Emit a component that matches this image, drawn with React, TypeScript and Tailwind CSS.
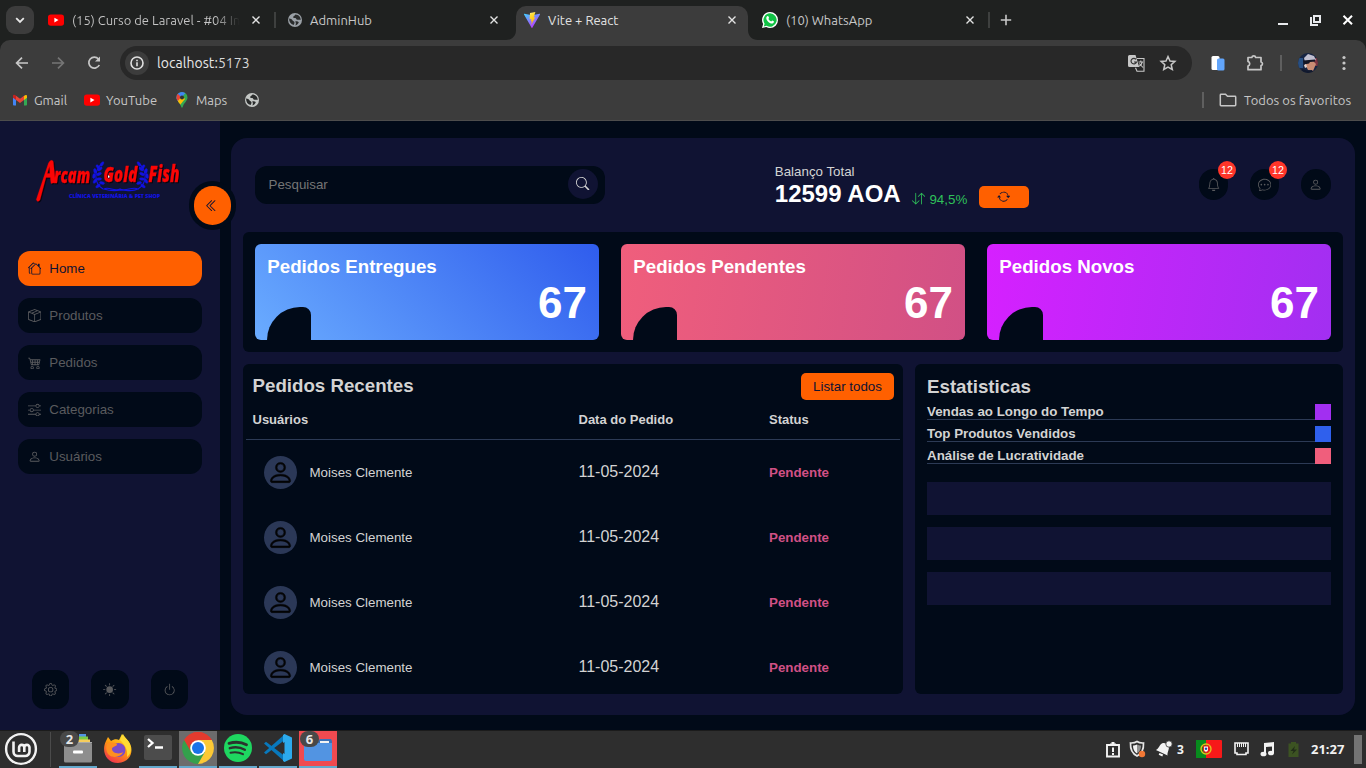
import type { ReactNode } from "react";
import {
  BsArrowDownUp,
  BsArrowRepeat,
  BsBell,
  BsBoxSeam,
  BsBrightnessHighFill,
  BsCart4,
  BsChatDots,
  BsChevronDoubleLeft,
  BsGear,
  BsHouses,
  BsPerson,
  BsPower,
  BsSearch,
  BsSliders,
} from "react-icons/bs";

function YouTubeIcon() {
  return (
    <svg width="16" height="16" viewBox="0 0 16 16" className="shrink-0">
      <rect y="2.4" width="16" height="11.4" rx="2.8" fill="#ff0000" />
      <path d="M6.4 5.7v4.8L10.5 8.1z" fill="#fff" />
    </svg>
  );
}

function GlobeIcon({ color }: { color: string }) {
  return (
    <svg width="14" height="14" viewBox="0 0 14 14" className="shrink-0">
      <circle cx="7" cy="7" r="7" fill={color} />
      <path
        d="M1.1 5.6c1.6.2 3 .8 3.5 1.9.5.9 1.8.6 1.9 1.8.1 1-.3 1.8-.9 2.8C2.5 11.4 1 8.6 1.1 5.6zM7.4 1.4c-.3 1.3-2.4 1.5-2.3 2.8.2 1 1.6.5 2.4.8.9.4.6 1.6 1.8 1.8 1 .1 1.9-.4 3.3.2C13 4 10.6 1.5 7.4 1.4zM7.2 8.6c1.2-.5 2.8-.3 3.6.7-.4 1.4-1.8 2.9-3.4 3.2.5-1.3.8-2.6-.2-3.9z"
        fill="#2a2c2c"
      />
    </svg>
  );
}

function CloseIcon() {
  return (
    <svg width="8" height="8" viewBox="0 0 8 8" className="shrink-0">
      <path d="M.5.5l7 7M7.5.5l-7 7" stroke="#e3e3e3" strokeWidth="1.4" />
    </svg>
  );
}

function TabStrip() {
  return (
    <div className="flex h-10 shrink-0 items-center bg-[#1f2120] text-[13px] text-[#c7c7c7]">
      <div className="ml-1.5 flex h-7 w-7 shrink-0 items-center justify-center rounded-[9px] bg-[#3c3c3c]">
        <svg width="10" height="7" viewBox="0 0 10 7">
          <path d="M1.2 1.2L5 5l3.8-3.8" fill="none" stroke="#e8e8e8" strokeWidth="1.8" />
        </svg>
      </div>
      <div className="ml-3.5 flex w-[213px] items-center">
        <YouTubeIcon />
        <span className="ml-2 w-[168px] overflow-hidden bg-linear-to-r from-[#c7c7c7] from-85% to-transparent bg-clip-text pt-px whitespace-nowrap text-transparent">
          (15) Curso de Laravel - #04 In
        </span>
        <span className="ml-3">
          <CloseIcon />
        </span>
      </div>
      <div className="ml-[13px] h-4 w-0.5 bg-[#3e403f]" />
      <div className="ml-[12px] flex w-[210px] items-center">
        <GlobeIcon color="#9aa0a6" />
        <span className="mt-px ml-2 grow">AdminHub</span>
        <CloseIcon />
      </div>
      <div className="mt-1.5 ml-[8px] flex h-[34px] items-end">
        <svg width="10" height="10" viewBox="0 0 10 10">
          <path d="M10 0v10H0C6 10 10 6 10 0z" fill="#3c3c3c" />
        </svg>
        <div className="flex h-[34px] w-[232px] items-center rounded-t-[10px] bg-[#3c3c3c] pr-3 pb-1.5 pl-2 text-[#e3e3e3]">
          <svg width="16" height="16" viewBox="0 0 16 16" className="shrink-0">
            <defs>
              <linearGradient id="vite-a" x1="0" y1="0" x2=".6" y2="1">
                <stop stopColor="#41d1ff" />
                <stop offset="1" stopColor="#bd34fe" />
              </linearGradient>
              <linearGradient id="vite-b" x1=".4" y1="0" x2=".6" y2="1">
                <stop stopColor="#ffea83" />
                <stop offset=".2" stopColor="#ffdd35" />
                <stop offset="1" stopColor="#ffa800" />
              </linearGradient>
            </defs>
            <path d="M16 2.4L8.3 15.8c-.2.3-.5.3-.7 0L0 2.4c-.2-.3.1-.6.4-.6L8 3.2l7.500-1.4c.4 0 .7.3.5.6z" fill="url(#vite-a)" />
            <path d="M11.4 0L6 1.1l-.4 6.1 1.7-.3-.5 2.5 1.1-.3-.8 3.8 4.200-7.6-1.6.3z" fill="url(#vite-b)" />
          </svg>
          <span className="mt-0.5 ml-2 grow">Vite + React</span>
          <CloseIcon />
        </div>
        <svg width="10" height="10" viewBox="0 0 10 10">
          <path d="M0 0v10h10C4 10 0 6 0 0z" fill="#3c3c3c" />
        </svg>
      </div>
      <div className="ml-1 flex w-[212px] items-center">
        <svg width="16" height="16" viewBox="0 0 16 16" className="shrink-0">
          <path d="M8 0a8 8 0 0 1 0 16 8 8 0 0 1-3.800-1L0 16l1.100-4A8 8 0 0 1 8 0z" fill="#fff" />
          <path d="M8 1.300a6.700 6.700 0 1 1-3.400 12.500l-2.800.6.8-2.700A6.700 6.700 0 0 1 8 1.300z" fill="#11c245" />
          <path d="M5.500 4.100c.5-.2.8 0 1 .5l.5 1.100c.1.4-.5.9-.6 1.200.7 1.300 1.600 2 2.800 2.500.4-.1.800-1 1.100-.9l1.500.8c.5.3-.1 1.700-.8 2-1.300.7-3.800-.4-5.300-2.100C4 7.300 3.600 5 5.500 4.100z" fill="#fff" />
        </svg>
        <span className="mt-px ml-2 grow">(10) WhatsApp</span>
        <CloseIcon />
      </div>
      <div className="ml-[14px] h-4 w-0.5 bg-[#3e403f]" />
      <svg width="12" height="12" viewBox="0 0 12 12" className="ml-2.5">
        <path d="M6 .8v10.400M.8 6h10.400" stroke="#c7c7c7" strokeWidth="1.6" />
      </svg>
      <svg width="76" height="12" viewBox="0 0 76 12" className="mr-3 ml-auto">
        <path d="M0 10h10" stroke="#e8eaed" strokeWidth="2" />
        <path d="M36 2h6v6h-6zM33 3v8h7" fill="none" stroke="#e8eaed" strokeWidth="2" />
        <path d="M65.500 1.700l8.500 8.500M74 1.700l-8.500 8.500" stroke="#fff" strokeWidth="2" />
      </svg>
    </div>
  );
}

function AddressBar() {
  return (
    <div className="flex h-[46px] items-center text-[#c7c7c7]">
      <svg width="88" height="16" viewBox="0 0 88 16" className="ml-[15px]" fill="none" strokeWidth="1.7">
        <path d="M13 8H2M7 2.600L1.600 8 7 13.400" stroke="#c7c7c7" />
        <path d="M37 8h11M43 2.600L48.400 8 43 13.400" stroke="#757575" />
        <path d="M84.300 10a5.500 5.500 0 1 1-.8-6" stroke="#c7c7c7" />
        <path d="M85 1.500v5h-5z" fill="#c7c7c7" />
      </svg>
      <div className="ml-[17px] flex h-[34px] w-[1072px] items-center rounded-full bg-[#282828] px-[5px]">
        <div className="flex h-6 w-6 items-center justify-center rounded-full bg-[#3c3c3c]">
          <svg width="14" height="14" viewBox="0 0 14 14">
            <circle cx="7" cy="7" r="6" fill="none" stroke="#e0e0e0" strokeWidth="1.6" />
            <path d="M7 6.200v4M7 3.700v1.500" stroke="#e0e0e0" strokeWidth="1.6" />
          </svg>
        </div>
        <span className="ml-2 text-[14px] tracking-[0.050px] text-[#d8d8d8]">
          <span className="text-[#e8e8e8]">localhost:</span>5173
        </span>
        <svg width="50" height="18" viewBox="0 0 50 18" className="mr-[9px] ml-auto">
          <path d="M1.500 1h6l3.700 12H1.500A1.500 1.500 0 0 1 0 11.500v-9A1.500 1.500 0 0 1 1.500 1z" fill="#c7c7c7" />
          <path d="M8 5.300A2.800 2.800 0 1 0 8.500 8H6" fill="none" stroke="#333" strokeWidth="1.2" />
          <path d="M9 4.500h7v12.700H9l-1.500-3.500M10.500 8h4.500M12.800 6.500V8M14.300 8c-.5 2-1.500 3-3 4.200M11.300 9.500l3.700 4" fill="none" stroke="#c7c7c7" strokeWidth="1.1" />
          <path d="M40 2.500l2 4.500 4.900.4-3.700 3.300 1.100 4.800L40 13l-4.300 2.500 1.100-4.800-3.700-3.300L38 7z" fill="none" stroke="#c7c7c7" strokeWidth="1.5" />
        </svg>
      </div>
      <svg width="68" height="18" viewBox="0 0 68 18" className="ml-[18px]">
        <rect x="1.500" y="2" width="8" height="14" rx="1.5" fill="#fff" />
        <rect x="7" y="4.500" width="7.500" height="12" rx="1.5" fill="#62a5fb" />
        <path d="M38 3.500h3.800a2 2 0 0 1 3.900 0H51v4.500a1.900 1.900 0 0 1 0 3.700v4H38v-3.700a2.400 2.400 0 0 0 0-4.600z" fill="none" stroke="#c7c7c7" strokeWidth="1.7" strokeLinejoin="round" />
      </svg>
      <div className="ml-[2px] h-4 w-0.5 bg-[#5f5f5f]" />
      <svg width="20" height="20" viewBox="0 0 20 20" className="ml-4">
        <defs>
          <clipPath id="profile">
            <circle cx="10" cy="10" r="10" />
          </clipPath>
        </defs>
        <g clipPath="url(#profile)">
          <path d="M0 0h20v20H0z" fill="#172442" />
          <path d="M0 5h5v10H0z" fill="#284f82" />
          <path d="M14 5h6v8h-5z" fill="#7d3541" />
          <path d="M6 9l9-1 3 3-3 7-5-1z" fill="#c98c74" />
          <path d="M6 5l4-4 6 2 2 4-11 2z" fill="#c1bfd0" />
          <path d="M5 7.500l12-1v2l-5 .5-1 1.500-5 1z" fill="#141625" />
          <path d="M6 12l2-1 1 3-2 1z" fill="#e5d7d3" />
          <path d="M4 16l5 1.500 5-.5 3 4H3z" fill="#11192d" />
        </g>
      </svg>
      <svg width="4" height="16" viewBox="0 0 4 16" className="ml-6" fill="#c7c7c7">
        <circle cx="2" cy="2.500" r="1.6" />
        <circle cx="2" cy="8" r="1.6" />
        <circle cx="2" cy="13.500" r="1.6" />
      </svg>
    </div>
  );
}

function Bookmarks() {
  return (
    <div className="flex h-[28px] items-center text-[13px] text-[#c7c7c7]">
      <svg width="14" height="12" viewBox="0 0 14 12" className="ml-[13px]">
        <path d="M0 2.500v8.200c0 .5.400.8.800.8H3V5z" fill="#4285f4" />
        <path d="M14 2.500v8.200c0 .5-.4.8-.8.8H11V5z" fill="#34a853" />
        <path d="M11 2v4l3-2.200V2.200C14 .7 12.500.3 11 2z" fill="#fbbc04" />
        <path d="M3 6V1.800l4 3 4-3V6L7 9z" fill="#ea4335" />
        <path d="M0 2.200v1.600L3 6V1.800C1.500.2 0 .8 0 2.200z" fill="#c5221f" />
      </svg>
      <span className="mt-0.5 ml-[7px] w-[34px] whitespace-nowrap">Gmail</span>
      <span className="ml-4">
        <YouTubeIcon />
      </span>
      <span className="mt-0.5 ml-1.5 w-[52px] whitespace-nowrap">YouTube</span>
      <svg width="12" height="16" viewBox="0 0 12 16" className="ml-[18px]">
        <defs>
          <clipPath id="pin">
            <path d="M6 0a5.500 5.500 0 0 1 5.500 5.500C11.500 9 8 10.500 6.700 15c-.2.9-1.200.9-1.400 0C4 10.500.5 9 .5 5.500A5.500 5.500 0 0 1 6 0z" />
          </clipPath>
        </defs>
        <g clipPath="url(#pin)">
          <path d="M0 0h12v16H0z" fill="#34a853" />
          <path d="M0 12L12-2v-4H0z" fill="#4285f4" />
          <path d="M0 0l5.500 5.500-4.500 4.500H0z" fill="#ea4335" />
          <path d="M1 10l5-6 3 3-5 6z" fill="#fbbc04" />
          <circle cx="6" cy="5.500" r="2" fill="#303134" />
        </g>
      </svg>
      <span className="mt-0.5 ml-2 w-[32px] whitespace-nowrap">Maps</span>
      <span className="ml-[17px]">
        <GlobeIcon color="#c4c7c5" />
      </span>
      <div className="ml-auto h-4 w-0.5 bg-[#5f5f5f]" />
      <svg width="18" height="14" viewBox="0 0 18 14" className="ml-[15px]">
        <path d="M2 1.300h4.500l2 2H16a.7.7 0 0 1 .7.7v8a.7.7 0 0 1-.7.7H2a.7.7 0 0 1-.7-.7V2a.7.7 0 0 1 .7-.7z" fill="none" stroke="#c7c7c7" strokeWidth="1.5" />
      </svg>
      <span className="mt-0.5 mr-[14px] ml-[7px] w-[108px] tracking-[0.050px] whitespace-nowrap">Todos os favoritos</span>
    </div>
  );
}

function Laurel() {
  const leaves = [
    [4, 5, -40],
    [1, 9, -10],
    [0, 14, 10],
    [1, 19, 35],
    [4, 24, 55],
    [8, 2, 35],
    [6, 7, 50],
    [5, 12, 65],
    [5, 17, 85],
    [8, 21, 100],
  ];
  return (
    <g fill="none" stroke="#1212e2" strokeWidth="1.1">
      <path d="M10 1C1 7 0 21 10 27" />
      {leaves.map(([x, y, r], i) => (
        <ellipse key={i} cx={x + 1} cy={y} rx="1.3" ry="2.6" fill="#1212e2" strokeWidth=".4" transform={`rotate(${r} ${x + 1} ${y})`} />
      ))}
    </g>
  );
}

function LogoShadow({ children }: { children: ReactNode }) {
  return <g style={{ filter: "drop-shadow(1px 1px 0 #050510)" }}>{children}</g>;
}

function Logo() {
  return (
    <svg width="148" height="48" viewBox="0 0 148 48" className="mx-auto block overflow-visible">
      <g transform="translate(57 5)">
        <Laurel />
      </g>
      <g transform="translate(112 5) scale(-1 1)">
        <Laurel />
      </g>
      <path d="M68 32c5-3 10 3 16 0 6 3 12-3 18 0-6 3-11 1-17 1-6 1-11 1-17-1z" fill="none" stroke="#1212e2" strokeWidth="1.2" />
      <LogoShadow>
        <g fill="#fb0505" stroke="#fb0505" strokeWidth=".3" fontFamily="'Open Sans', 'Noto Sans', sans-serif" fontWeight="800" fontStyle="italic">
          <path d="M.3 42.500L12.500 6Q15 1.500 17.300 4.500L19.500 25.500 15 26.500 14.300 20.500H10L4 43Q1.500 46 .3 42.500zM11.300 16.500h2.700l-.6-7z" fillRule="evenodd" />
          <text transform="translate(18 25.500) scale(.700 1)" fontSize="21">rcam</text>
          <text transform="translate(67.500 25) scale(.720 1)" fontSize="21">Gold</text>
          <text transform="translate(112.500 24.500) scale(.700 1)" fontSize="22">Fish</text>
        </g>
      </LogoShadow>
      <text transform="translate(33 40.500)" fontFamily="'Open Sans', sans-serif" fontWeight="800" fontSize="5.200" fill="#1212e2" textLength="91" lengthAdjust="spacingAndGlyphs">
        CLÍNICA VETERINÁRIA &amp; PET SHOP
      </text>
      <path d="M72 18v3l2-1z" fill="#fff" />
    </svg>
  );
}

function MenuItem({ icon, label, active = false }: { icon: ReactNode; label: string; active?: boolean }) {
  return (
    <li
      className={
        active
          ? "flex h-[35px] items-center gap-2 rounded-xl bg-[#ff6000] pl-2.5 text-[#101333]"
          : "flex h-[35px] items-center gap-2 rounded-xl bg-[#010a18] pl-2.5 text-[#5a5b5e]"
      }
    >
      {icon}
      <span>{label}</span>
    </li>
  );
}

function Sidebar() {
  return (
    <aside className="relative flex w-[220px] shrink-0 flex-col bg-[#101333] px-[18px] pt-9">
      <Logo />
      <div className="absolute top-[60px] left-[189px] flex h-[49px] w-[47px] items-center justify-center rounded-full bg-[#010a18]">
        <div className="flex h-[39px] w-[37px] items-center justify-center rounded-full bg-[#ff6000] pr-px text-[#101333]">
          <BsChevronDoubleLeft size={13.3} />
        </div>
      </div>
      <ul className="mt-[46px] flex flex-col gap-3">
        <MenuItem active icon={<BsHouses size={13.3} />} label="Home" />
        <MenuItem icon={<BsBoxSeam size={13.3} />} label="Produtos" />
        <MenuItem icon={<BsCart4 size={13.3} />} label="Pedidos" />
        <MenuItem icon={<BsSliders size={13.3} />} label="Categorias" />
        <MenuItem icon={<BsPerson size={13.3} />} label="Usuários" />
      </ul>
      <div className="mt-auto mb-[21px] flex justify-between px-3.5 text-[#5a5b5e]">
        <div className="flex h-[39px] w-[37px] items-center justify-center rounded-xl bg-[#010a18]">
          <BsGear size={13.3} />
        </div>
        <div className="flex h-[39px] w-[38px] items-center justify-center rounded-xl bg-[#010a18]">
          <BsBrightnessHighFill size={13.3} />
        </div>
        <div className="flex h-[39px] w-[37px] items-center justify-center rounded-xl bg-[#010a18]">
          <BsPower size={13.3} />
        </div>
      </div>
    </aside>
  );
}

function RoundButton({ icon, badge, wide }: { icon: ReactNode; badge?: string; wide?: boolean }) {
  return (
    <div className={`relative flex h-[31px] items-center justify-center rounded-full bg-[#010a18] text-[#5a5b5e] ${wide ? "w-[30px]" : "w-[29px]"}`}>
      {icon}
      {badge && (
        <span className="absolute -top-2 left-[19px] flex h-[18px] w-[18px] items-center justify-center rounded-full bg-[#ff3529] text-[10.700px] text-white">
          {badge}
        </span>
      )}
    </div>
  );
}

function Header() {
  return (
    <header className="flex h-[70px] shrink-0 items-start px-3">
      <div className="mt-4 flex h-[38px] w-[350px] items-center justify-between rounded-xl bg-[#010a18] pr-[7px] pl-[13.500px] text-[#757575]">
        <span>Pesquisar</span>
        <div className="mb-0.5 flex h-[30px] w-[30px] items-center justify-center rounded-full bg-[#101333] pb-px text-[#d3d3d3]">
          <BsSearch size={13.3} />
        </div>
      </div>
      <div className="mt-[14px] ml-[169.800px] text-[#d3d3d3]">
        <div className="h-4 leading-[15px]">Balanço Total</div>
        <div className="flex">
          <span className="text-[24px] leading-[28px] font-bold text-white">12599 AOA</span>
          <span className="mt-3 ml-[11.500px] flex h-4 items-center gap-[4px] leading-4 text-[#2fc05a]">
            <BsArrowDownUp size={13.3} className="mb-0.5" />
            94,5%
          </span>
          <span className="mt-1.5 ml-[11.500px] flex h-[22px] w-[50px] items-center justify-center rounded-[5px] bg-[#ff6000] pb-px text-[#101333]">
            <BsArrowRepeat size={13.3} />
          </span>
        </div>
      </div>
      <div className="mt-[19px] ml-auto flex gap-[22px]">
        <RoundButton icon={<BsBell size={13.3} />} badge="12" />
        <RoundButton icon={<BsChatDots size={13.3} />} badge="12" />
        <RoundButton wide icon={<BsPerson size={13.3} />} />
      </div>
    </header>
  );
}

function SummaryCard({ title, tone }: { title: string; tone: string }) {
  return (
    <div className={`flex h-24 w-[344px] flex-col rounded-md px-3 ${tone}`}>
      <h3 className="mt-3 h-[22px] pl-[0.300px] text-[18.720px] leading-[22px] font-bold">{title}</h3>
      <div className="flex grow items-end justify-between">
        <div className="h-[33px] w-11 rounded-tl-[33px] rounded-tr-lg bg-[#010a18]" />
        <span className="mb-3 text-[44px] leading-[50px] font-bold">67</span>
      </div>
    </div>
  );
}

function RecentOrders() {
  return (
    <section className="h-[330px] w-[660px] overflow-hidden rounded-md bg-[#010a18] px-[3px] pt-[9px]">
      <div className="flex h-[27px] items-center justify-between pr-1.5 pl-[6.500px]">
        <h3 className="mb-0.5 text-[18.720px] leading-[22px] font-bold">Pedidos Recentes</h3>
        <button className="h-[27px] w-[93px] rounded-[5px] bg-[#ff6000] text-[#101333]">Listar todos</button>
      </div>
      <div className="mt-px grid h-[39px] grid-cols-[326px_190.500px_1fr] items-center border-b border-[#2c3a55] pl-[6.500px] text-[13px] font-bold">
        <span>Usuários</span>
        <span>Data do Pedido</span>
        <span>Status</span>
      </div>
      {[0, 1, 2, 3].map((row) => (
        <div key={row} className="grid h-[65px] grid-cols-[326px_190.500px_1fr] items-center pl-[6.500px]">
          <div className="flex items-center gap-[12.500px] pl-[11.500px]">
            <div className="flex h-[33px] w-[33px] items-center justify-center rounded-full bg-[#2b3857] text-[#030405]">
              <BsPerson size={27} strokeWidth={0.3} />
            </div>
            <span>Moises Clemente</span>
          </div>
          <span className="mb-0.5 text-base">11-05-2024</span>
          <span className="font-bold text-[#d15085]">Pendente</span>
        </div>
      ))}
    </section>
  );
}

function Stats() {
  const series = [
    { label: "Vendas ao Longo do Tempo", tone: "bg-[#a22ff1]" },
    { label: "Top Produtos Vendidos", tone: "bg-[#2f60ed]" },
    { label: "Análise de Lucratividade", tone: "bg-[#f05e7c]" },
  ];
  return (
    <section className="h-[330px] w-[428px] rounded-md bg-[#010a18] px-3 pt-3">
      <h3 className="text-[18.720px] leading-[22px] font-bold">Estatisticas</h3>
      <ul className="mt-1.5 flex flex-col gap-1.5">
        {series.map((s) => (
          <li key={s.label} className="flex h-4 items-end font-bold">
            <span className="h-4 grow border-b border-[#2c3a55] leading-[15px]">{s.label}</span>
            <span className={`h-4 w-4 ${s.tone}`} />
          </li>
        ))}
      </ul>
      <div className="mt-[18px] flex flex-col gap-3">
        <div className="h-[33px] bg-[#101333]" />
        <div className="h-[33px] bg-[#101333]" />
        <div className="h-[33px] bg-[#101333]" />
      </div>
    </section>
  );
}

function Dashboard() {
  return (
    <div className="flex h-[609px] shrink-0 overflow-hidden bg-[#010a18] font-['Liberation_Sans',Arial,sans-serif] text-[13.330px] text-[#d3d3d3]">
      <Sidebar />
      <main className="mt-[17px] ml-[11px] flex h-[577px] w-[1124px] flex-col gap-3 rounded-2xl bg-[#101333] px-3 pt-3">
        <Header />
        <section className="flex h-[120px] shrink-0 justify-between rounded-md bg-[#010a18] p-3 text-white">
          <SummaryCard title="Pedidos Entregues" tone="bg-linear-[45deg,#6aacff,#2f5ced]" />
          <SummaryCard title="Pedidos Pendentes" tone="bg-linear-[98deg,#f05e7c,#d15085]" />
          <SummaryCard title="Pedidos Novos" tone="bg-linear-[98deg,#d620ff,#a22ff1]" />
        </section>
        <div className="flex justify-between">
          <RecentOrders />
          <Stats />
        </div>
      </main>
    </div>
  );
}

function TaskItem({ children, badge, state = "" }: { children?: ReactNode; badge?: string; state?: string }) {
  return (
    <div className={`relative flex h-[37px] w-[38px] items-center justify-center pb-0.5 ${state}`}>
      {children}
      {badge && (
        <span className="absolute top-0 left-[1px] flex h-4 w-[19px] items-center justify-center rounded-full bg-[#484848] pt-0.5 text-[13px] font-bold text-[#e6e6e6]">
          {badge}
        </span>
      )}
    </div>
  );
}

function Taskbar() {
  return (
    <footer className="flex h-[38px] shrink-0 items-end border-t border-[#1b1b1b] bg-[#2e2e2e] font-['Noto_Sans',sans-serif] text-[13px]">
      <svg width="34" height="34" viewBox="0 0 34 34" className="mb-[2px] ml-1">
        <circle cx="17" cy="17" r="14.9" fill="none" stroke="#f2f2f2" strokeWidth="2.4" />
        <path d="M9.500 9.500v10.200a4.300 4.300 0 0 0 4.300 4.300h7.400a4.300 4.300 0 0 0 4.300-4.300v-4.200a2.600 2.600 0 0 0-5.200 0V20v-4.500a2.600 2.600 0 0 0-5.200 0V20" fill="none" stroke="#f2f2f2" strokeWidth="2.6" />
      </svg>
      <div className="mb-[1px] ml-3 h-[35px] w-px bg-[#4b4b4b]" />
      <div className="ml-2 flex gap-0.5">
        <TaskItem badge="2" state="border-b-2 border-[#64a9cd]">
          <svg width="30" height="32" viewBox="0 0 30 32">
            <path d="M16 2h7v4h-7z" fill="#5294e2" />
            <path d="M16 4.500h9v4h-9z" fill="#7bcb43" />
            <path d="M14 7.500h13v4H14z" fill="#f6cd5c" />
            <rect x="1" y="10.500" width="28" height="20" rx="1.5" fill="#8e8e8e" />
            <path d="M1 10.500h28" stroke="#aaa" />
            <rect x="10" y="18.500" width="10" height="3" rx="1" fill="#fff" />
          </svg>
        </TaskItem>
        <TaskItem>
          <svg width="30" height="32" viewBox="0 0 30 32">
            <defs>
              <linearGradient id="fox" x1=".8" y1=".1" x2=".3" y2="1">
                <stop stopColor="#ffe226" />
                <stop offset=".45" stopColor="#ff980e" />
                <stop offset="1" stopColor="#f0334e" />
              </linearGradient>
            </defs>
            <path d="M3 8l2-4 3 4c3-2 6-2 8-1l3-6c2 4 5 5 7 8 5 7 3 20-11 21C3 30-2 18 3 8z" fill="url(#fox)" />
            <path d="M17 7l3-6c2 4 6 6 7 11 2 5 0 10-3 12 1-8-2-12-7-17z" fill="#ffdb35" />
            <circle cx="15.500" cy="17" r="7" fill="#7b4bc7" />
            <path d="M4 11c5-3 7-1 10 0 0 3-5 2-5 5 0 4 7 6 11 3-1 5-13 8-16 0-1-3-1-5 0-8z" fill="#ff8f20" />
          </svg>
        </TaskItem>
        <TaskItem state="border-b-2 border-[#64a9cd]">
          <svg width="28" height="25" viewBox="0 0 28 25">
            <rect width="28" height="25" rx="2" fill="#4c4c4c" />
            <path d="M4 4l4.500 4L4 12" fill="none" stroke="#fff" strokeWidth="2.3" />
            <path d="M11 12.500h8" stroke="#fff" strokeWidth="2.5" />
          </svg>
        </TaskItem>
        <TaskItem state="border-b-2 border-[#64a9cd] bg-[#6c6c6c]">
          <svg width="32" height="32" viewBox="0 0 32 32">
            <path d="M16 16L2.200 8A16 16 0 0 1 29.800 8z" fill="#e33b2e" />
            <path d="M16 16V8h13.800A16 16 0 0 1 16 32z" fill="#fcc934" />
            <path d="M2.200 8L16 16l6.900 4L16 32A16 16 0 0 1 2.200 8z" fill="#34a04c" />
            <path d="M2.200 8A16 16 0 0 1 29.800 8H16a8 8 0 0 0-7 12z" fill="#e33b2e" />
            <circle cx="16" cy="16" r="7.8" fill="#fff" />
            <circle cx="16" cy="16" r="6" fill="#1a73e8" />
          </svg>
        </TaskItem>
        <TaskItem state="border-b-2 border-[#64a9cd]">
          <svg width="28" height="28" viewBox="0 0 28 28">
            <circle cx="14" cy="14" r="14" fill="#1ed760" />
            <g fill="none" stroke="#2b332e" strokeLinecap="round">
              <path d="M5 9.400c6-1.800 12.500-1.300 17.500 1.400" strokeWidth="2.8" />
              <path d="M5.800 14.200c5-1.500 10.500-1 15 1.600" strokeWidth="2.4" />
              <path d="M6.500 18.700c4.500-1 8.600-.6 12.500 1.500" strokeWidth="2" />
            </g>
          </svg>
        </TaskItem>
        <TaskItem state="border-b-2 border-[#64a9cd]">
          <svg width="28" height="28" viewBox="0 0 28 28">
            <path d="M0 9.500l2-1.700 20 15.200-1 5z" fill="#0879bd" />
            <path d="M0 18.500l2 1.800L22 5l-1-5z" fill="#0879bd" />
            <path d="M20.500 0L28 3.500v21L20.500 28l-1.500-1V1z" fill="#2caaed" />
            <path d="M20.500 8v12L12 14z" fill="#2e2e2e" />
          </svg>
        </TaskItem>
        <TaskItem badge="6" state="border-b-2 border-[#64a9cd] bg-[#f04a50]">
          <svg width="28" height="24" viewBox="0 0 28 24" className="mt-1">
            <path d="M0 3h14l2-2h11l1 2v19H0z" fill="#3b70b5" />
            <path d="M16 3h9v3h-9z" fill="#f3f3f3" />
            <path d="M0 5h28v16a2 2 0 0 1-2 2H2a2 2 0 0 1-2-2z" fill="#5294e2" />
          </svg>
        </TaskItem>
      </div>
      <div className="ml-auto flex h-[37px] items-center font-bold text-[#f2f2f2]">
        <svg width="14" height="18" viewBox="0 0 14 18">
          <path d="M1 4h12v11.500H1z" fill="none" stroke="#f2f2f2" strokeWidth="1.9" />
          <path d="M4 2.500h6V5H4zM5.500 1h3v2h-3zM6 6.500h2v4.500H6zM7 12H6v2h2v-2z" fill="#f2f2f2" />
        </svg>
        <svg width="17" height="18" viewBox="0 0 17 18" className="mb-px ml-[9px]">
          <path d="M8 1.500c2 1.500 4 1.600 6.500 1.500.3 6-1.500 10.500-6.500 13C3 13.500 1.200 9 1.500 3 4 3.100 6 3 8 1.500z" fill="none" stroke="#e6e6e6" strokeWidth="1.7" />
          <path d="M8 4.500c1.500.9 2.700 1 4 1 0 3.500-1 6-4 8z" fill="#929292" />
          <path d="M8 4.500c-1.500.9-2.700 1-4 1 0 3.500 1 6 4 8z" fill="#f2f2f2" />
          <circle cx="13" cy="14" r="3.2" fill="#f27835" />
        </svg>
        <svg width="18" height="18" viewBox="0 0 18 18" className="mb-px ml-[9px]">
          <g transform="rotate(25 8 9)">
            <path d="M2 13c2-2 1-7 3-9 1.500-1.500 5.500-1.500 7 0 2 2 1 7 3 9zM6.500 14h4v2h-4z" fill="#f2f2f2" />
          </g>
          <circle cx="14" cy="4" r="3.2" fill="#f2f2f2" stroke="#2e2e2e" strokeWidth=".8" />
        </svg>
        <span className="ml-[4px] w-2 text-[12px]">3</span>
        <svg width="26" height="18" viewBox="0 0 26 18" className="mb-px ml-[11px]">
          <path d="M0 0h11v18H0z" fill="#078b1d" />
          <path d="M10 0h15a1 1 0 0 1 1 1v16a1 1 0 0 1-1 1H10z" fill="#f71919" />
          <circle cx="10" cy="9" r="5" fill="none" stroke="#dfc31c" strokeWidth="1.4" />
          <path d="M7.500 6h5v4c0 3-5 3-5 0z" fill="#fff" stroke="#e31c1c" strokeWidth="1.2" />
          <circle cx="10" cy="8.800" r="1.2" fill="#1a4ca7" />
        </svg>
        <svg width="15" height="14" viewBox="0 0 15 14" className="mb-0.5 ml-3">
          <path d="M1 1h13v10h-2v1.500H3V11H1z" fill="none" stroke="#f2f2f2" strokeWidth="1.6" />
          <path d="M3.500 1v4M5.500 1v4M7.500 1v4M9.500 1v4M11.500 1v4" stroke="#f2f2f2" />
        </svg>
        <svg width="15" height="16" viewBox="0 0 15 16" className="mb-0.5 ml-[11px]">
          <path d="M4 2l10-1v11h-2V5.500L6 6v7H4z" fill="#f2f2f2" />
          <ellipse cx="3.500" cy="13" rx="3" ry="2.3" fill="#f2f2f2" />
          <ellipse cx="11" cy="12" rx="3" ry="2.3" fill="#f2f2f2" />
        </svg>
        <svg width="11" height="15" viewBox="0 0 11 15" className="mb-px ml-[13px]">
          <path d="M3 0h5v1.500h2.500V15H.5V1.500H3z" fill="#3c5322" />
          <path d="M7 4L2.500 9h3L4 12.500 9 7.500H6z" fill="#222d19" />
        </svg>
        <span className="ml-3 w-[35px] whitespace-nowrap">21:27</span>
        <div className="mr-1 ml-2 h-[29px] w-2 bg-[#747474]" />
      </div>
    </footer>
  );
}

export default function App() {
  return (
    <div className="flex h-[768px] w-[1366px] flex-col overflow-hidden bg-[#010a18] font-[Ubuntu,'Noto_Sans',sans-serif]">
      <TabStrip />
      <div className="h-[81px] shrink-0 bg-[#1f2120]">
        <div className="h-[81px] rounded-t-[10px] border-b border-[#4d4d4c] bg-[#3c3c3c]">
          <AddressBar />
          <Bookmarks />
        </div>
      </div>
      <Dashboard />
      <Taskbar />
    </div>
  );
}
